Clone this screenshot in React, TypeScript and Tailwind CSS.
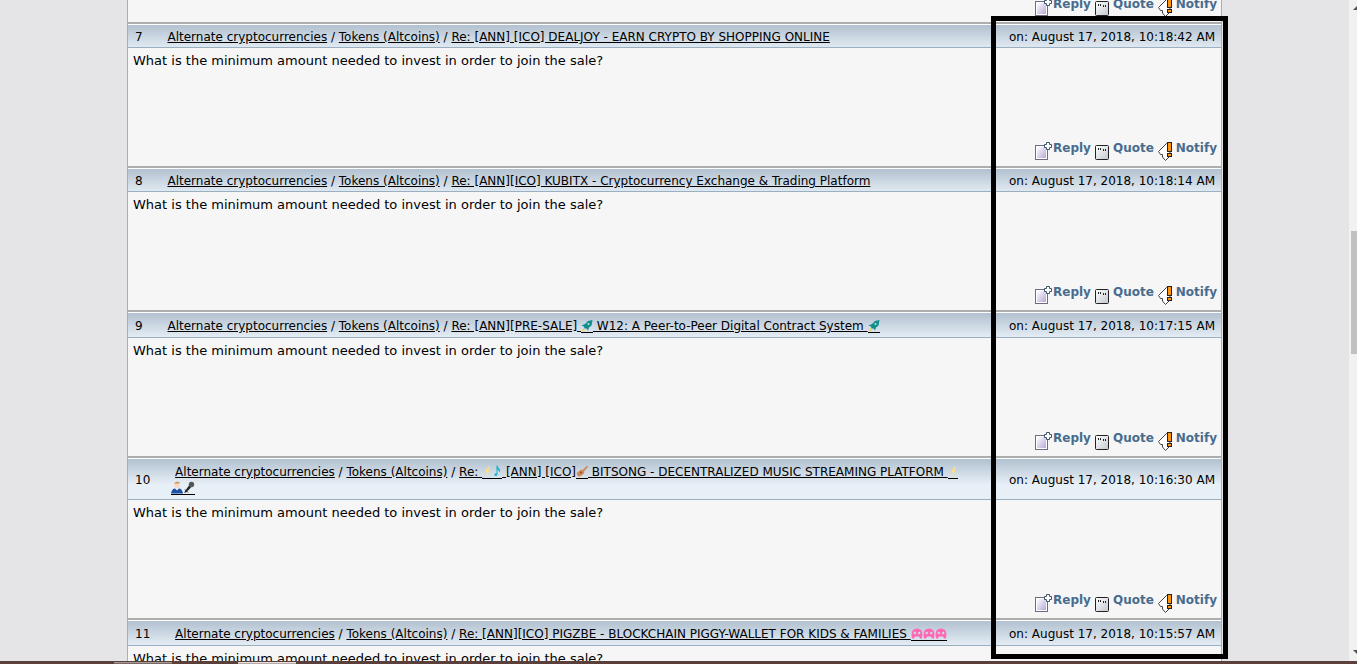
import React from "react"

type Post = {
    no : number,
    title : React.ReactNode,
    date : string,
    header : string,
}

const Rocket = () => (
    <svg viewBox="0 0 12 12" className="inline-block w-3 h-[14px] align-[-3px] border-b border-black">
        <path d="M11.500 0.500 L10.500 6 L8 8 L7 11 L5.500 9 L3.500 9 L3 7 L0.500 6 L4 4.500 L7 1.500 Z" fill="#0f8f8c" />
        <circle cx="7.500" cy="4.500" r="1" fill="#c9e4ea" />
        <path d="M2.500 8.500 L4 10 L3 11.500 L0.500 12 Z" fill="#f2ce5a" />
    </svg>
)

const Bolt = () => (
    <svg viewBox="0 0 10 12" className="inline-block w-[10px] h-[14px] align-[-3px] border-b border-black">
        <path d="M6.500 1 L2.500 6.500 L5 6.500 L3 11.500 L8 5 L5.500 5 L8 1.500 Z" fill="#ffdf7c" />
    </svg>
)

const Note = () => (
    <svg viewBox="0 0 10 12" className="inline-block w-[10px] h-[14px] align-[-3px] border-b border-black">
        <path d="M4.500 0 H5.500 Q6 2 8 4 Q8.500 5.500 7 7 Q7.500 5 5.500 4 V9 Q5 11 3 10.500 Q1.500 9 3 8 L4.500 7.700 Z" fill="#16b4c9" />
    </svg>
)

const Guitar = () => (
    <svg viewBox="0 0 12 12" className="inline-block w-3 h-[14px] align-[-3px] border-b border-black">
        <path d="M11 0 L12 1.500 L8 6 Q9 8 6.500 9 Q5 11.500 2.500 11 Q0 9.500 1 7 Q2 5.500 3.500 5.500 Q4 3.500 6.500 4.500 Z" fill="#d28a5c" />
        <circle cx="5" cy="7" r="1" fill="#8a4b2d" />
    </svg>
)

const Singer = () => (
    <svg viewBox="0 0 12 12" className="inline-block w-3 h-[14px] align-[-3px] border-b border-black">
        <circle cx="6" cy="3.500" r="3" fill="#f8d9c4" />
        <path d="M3 2 Q5 -1 9 1 L8 2 Z" fill="#c98f5a" />
        <path d="M0 12 Q1 7 4 7 L6 9 L8 7 Q11 7 12 12 Z" fill="#1b4fa8" />
    </svg>
)

const Mic = () => (
    <svg viewBox="0 0 12 12" className="inline-block w-3 h-[14px] align-[-3px] border-b border-black">
        <path d="M6 4 L8 6 L3 11 L1 11 Z" fill="#222" />
        <circle cx="8.500" cy="3" r="2.700" fill="#555" />
        <path d="M2 8 L5 11" stroke="#222" />
    </svg>
)

const Pig = () => (
    <svg viewBox="0 0 12 12" className="inline-block w-3 h-[14px] align-[-3px] border-b border-black">
        <path d="M1 11 Q-1 1 6 1 Q13 1 11 11 H9 L8 9 H4 L3 11 Z" fill="#ff69b4" />
        <circle cx="3.800" cy="5.500" r="1.200" fill="#c9dbe8" />
        <circle cx="8.200" cy="5.500" r="1.200" fill="#c9dbe8" />
    </svg>
)

const posts : Post[] = [
    {
        no : 7,
        title : "Re: [ANN] [ICO] DEALJOY - EARN CRYPTO BY SHOPPING ONLINE",
        date : "August 17, 2018, 10:18:42 AM",
        header : "h-[22px]",
    },
    {
        no : 8,
        title : "Re: [ANN][ICO] KUBITX - Cryptocurrency Exchange & Trading Platform",
        date : "August 17, 2018, 10:18:14 AM",
        header : "h-[22px]",
    },
    {
        no : 9,
        title : <>Re: [ANN][PRE-SALE] <Rocket /> W12: A Peer-to-Peer Digital Contract System <Rocket /></>,
        date : "August 17, 2018, 10:17:15 AM",
        header : "h-6",
    },
    {
        no : 10,
        title : <>Re: <Bolt /><Note /> [ANN] [ICO]<Guitar /> BITSONG - DECENTRALIZED MUSIC STREAMING PLATFORM <Bolt /><br /><Singer /><Mic /></>,
        date : "August 17, 2018, 10:16:30 AM",
        header : "h-10",
    },
    {
        no : 11,
        title : <>Re: [ANN][ICO] PIGZBE - BLOCKCHAIN PIGGY-WALLET FOR KIDS & FAMILIES <Pig /><Pig /><Pig /></>,
        date : "August 17, 2018, 10:15:57 AM",
        header : "h-6",
    },
]

function Actions() {
    return (
        <div className="flex justify-end pr-1 pb-1 text-xs leading-5 font-bold text-[#476c8e]">
            <a href="#reply" className="flex items-start">
                <svg viewBox="0 0 18 18" className="w-[18px] h-[18px] mt-1">
                    <defs>
                        <linearGradient id="sheet" x1="0" y1="0" x2="1" y2="1">
                            <stop offset="0" stopColor="#ffffff" />
                            <stop offset="1" stopColor="#b8a8d8" />
                        </linearGradient>
                    </defs>
                    <rect x="0.500" y="3.500" width="12" height="14" fill="#fff" stroke="#6c6c84" />
                    <rect x="2" y="5" width="9" height="11" fill="url(#sheet)" />
                    <path d="M11.500 0.500 h3 v2 h2 v3 h-2 v2 h-3 v-2 h-2 v-3 h2 z" fill="#fff" stroke="#3f5468" />
                </svg>
                Reply
            </a>
            <a href="#quote" className="flex items-start ml-1">
                <svg viewBox="0 0 18 18" className="w-[18px] h-[18px] mt-1">
                    <defs>
                        <linearGradient id="card" x1="0" y1="0" x2="1" y2="1">
                            <stop offset="0" stopColor="#ffffff" />
                            <stop offset="1" stopColor="#c3c8d0" />
                        </linearGradient>
                    </defs>
                    <rect x="0.500" y="3.500" width="13" height="14" rx="1" fill="url(#card)" stroke="#222" />
                    <path d="M3.500 6 v2 M5.500 6 v2 M8.500 7 v2 M10.500 7 v2" stroke="#222" />
                </svg>
                Quote
            </a>
            <a href="#notify" className="flex items-start ml-1">
                <svg viewBox="0 0 18 20" className="w-[18px] h-5 mt-1">
                    <path d="M0.500 9.500 L8.500 1.500 L12 5 V14 L7.500 18.500 L4.500 15 V12.500 H2.500 Z" fill="#fff" stroke="#444" />
                    <rect x="9.500" y="0.500" width="4" height="9" fill="#ff9410" stroke="#222" />
                    <rect x="9.500" y="11.500" width="4" height="3" fill="#ff9410" stroke="#222" />
                </svg>
                Notify
            </a>
        </div>
    )
}

function PostItem({post} : {post : Post}) {
    return (
        <article className="shrink-0 border-t-2 border-[#adadad]">
            <div className={`${post.header} box-content flex items-center border-t border-t-white border-b border-b-[#9aafc0] bg-[linear-gradient(to_bottom,#b2c1d0,#e8f0f7_26px)] pl-[7px] pr-1.5 text-xs leading-4`}>
                <span className="pt-0.5 pr-[21px]">{post.no}</span>
                <div className="flex-1 pt-0.5 whitespace-nowrap">
                    &nbsp;<a href="#board" className="underline">Alternate cryptocurrencies</a>
                    {" / "}
                    <a href="#tokens" className="underline">Tokens (Altcoins)</a>
                    {" / "}
                    <a href="#topic" className="underline">{post.title}</a>
                </div>
                <time className="pt-0.5">on: {post.date}</time>
            </div>
            <div className="h-[118px] flex flex-col justify-between">
                <p className="px-[5px] pt-[5px] text-[13px] leading-4">What is the minimum amount needed to invest in order to join the sale?</p>
                <Actions />
            </div>
        </article>
    )
}

export default function App() {
    return (
        <div className="h-screen flex flex-col overflow-hidden bg-[#e5e5e7] font-['DejaVu_Sans',sans-serif] text-black">
            <div className="flex-1 min-h-0 flex">
                <main className="relative flex-1 px-[127px]">
                    <div className="h-full flex flex-col overflow-hidden border-x border-[#adadad] bg-[#f6f6f6]">
                        <div className="h-[22px] shrink-0 flex flex-col justify-end">
                            <Actions />
                        </div>
                        {posts.map(post=>(
                            <PostItem key={post.no} post={post} />
                        ))}
                    </div>
                    <div className="absolute top-4 bottom-[2px] right-[121px] w-[237px] border-5 border-black"></div>
                </main>
                <div className="w-2 flex flex-col items-end justify-between bg-[#f1f1f1] overflow-hidden">
                    <svg viewBox="0 0 4 12" className="w-1 h-3"><path d="M0 10 L4 6 V10 Z" fill="#505050" /></svg>
                    <div className="w-1.5 h-[123px] mb-[76px] bg-[#c1c1c1]"></div>
                    <svg viewBox="0 0 4 12" className="w-1 h-3"><path d="M0 1 H4 V5 Z" fill="#505050" /></svg>
                </div>
            </div>
            <div className="h-[3px] shrink-0 flex items-end gap-[66px] pl-[114px] bg-[#5a3f3a]">
                <div className="w-[58px] h-0.5 border-t border-[#a39a96] bg-[#7b6763]"></div>
                <div className="w-[58px] h-0.5 border-t border-[#e4dfdc] bg-[#b5aaa5]"></div>
            </div>
        </div>
    )
}
